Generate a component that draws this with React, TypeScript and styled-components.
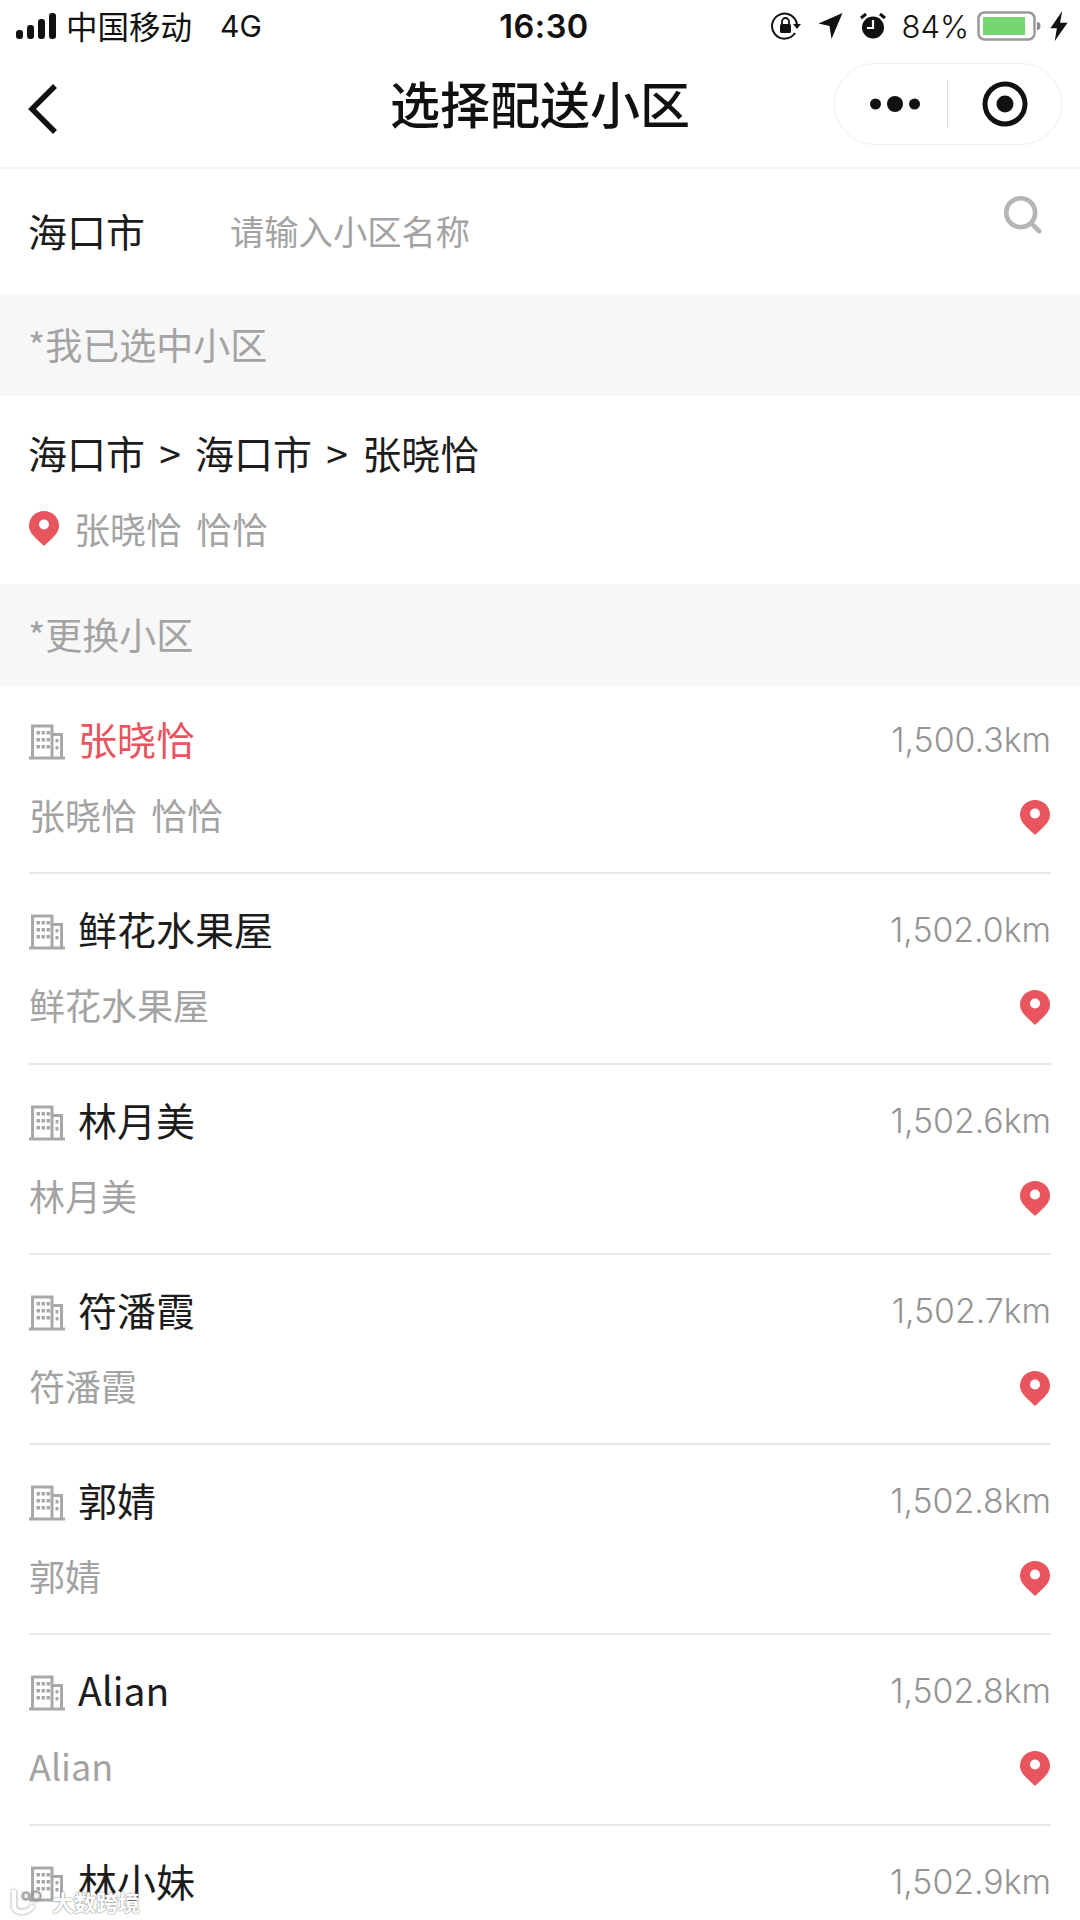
import * as React from "react";
import styled, { createGlobalStyle } from "styled-components";

const Colors = {
  text: "#1c1c1c",
  subtle: "#a3a3a3",
  red: "#e8555f",
  band: "#f7f7f7",
  line: "#e8e8e8"
};

const GlobalStyle = createGlobalStyle`
  html, body {
    margin: 0;
    padding: 0;
    background: #fff;
  }
  body {
    font-family: "Noto Sans CJK SC", "Noto Sans", sans-serif;
  }
`;

const Page = styled.div`
  position: relative;
  width: 1080px;
  height: 1920px;
  overflow: hidden;
  background: #fff;
`;

const StatusBar = styled.div`
  height: 52px;
  padding: 0 12px 0 16px;
  display: flex;
  align-items: center;
  justify-content: space-between;
  color: #111;
`;

const StatusSide = styled.div`
  flex: 1 1 0;
  display: flex;
  align-items: center;
  justify-content: ${p => (p.$right ? "flex-end" : "flex-start")};
`;

const Carrier = styled.span`
  margin-left: 10px;
  font-size: 31.500px;
  line-height: 1;
`;

const Network = styled.span`
  margin-left: 28px;
  font-family: "Inter", sans-serif;
  font-size: 30px;
  line-height: 1;
`;

const Clock = styled.span`
  margin-left: 4px;
  font-family: "Inter", sans-serif;
  font-size: 32.500px;
  font-weight: 600;
  letter-spacing: 0.5px;
`;

const Percent = styled.span`
  margin: 0 8px 0 16px;
  font-family: "Inter", sans-serif;
  font-size: 31px;
  font-weight: 300;
`;

const NavBar = styled.div`
  position: relative;
  height: 117px;
  box-sizing: border-box;
  padding: 11px 18px 0 28px;
  display: flex;
  align-items: flex-start;
  justify-content: space-between;
  border-bottom: 2px solid #f4f4f4;
`;

const BackIcon = styled.svg`
  width: 30px;
  height: 52px;
  margin-top: 20px;
`;

const Title = styled.div`
  position: absolute;
  left: 0;
  right: 0;
  top: 16px;
  text-align: center;
  font-size: 50px;
  line-height: 68px;
  font-weight: 500;
  color: #111;
`;

const Capsule = styled.div`
  width: 228px;
  height: 82px;
  box-sizing: border-box;
  border: 1px solid #eeeeee;
  border-radius: 41px;
  display: flex;
  align-items: center;
`;

const MenuSlot = styled.div`
  width: 112px;
  box-sizing: border-box;
  padding-left: 8px;
  display: flex;
  align-items: center;
  justify-content: center;
`;

const CloseSlot = styled.div`
  flex: 1;
  display: flex;
  align-items: center;
  justify-content: center;
`;

const CapsuleDivider = styled.div`
  width: 1px;
  height: 48px;
  background: #dddddd;
`;

const SearchRow = styled.div`
  height: 125px;
  box-sizing: border-box;
  padding: 0 28px 4px;
  display: flex;
  align-items: center;
`;

const City = styled.div`
  width: 202px;
  font-size: 39px;
  color: ${Colors.text};
`;

const Placeholder = styled.div`
  flex: 1;
  font-size: 34.300px;
  color: ${Colors.subtle};
`;

const SearchIcon = styled.svg`
  width: 41px;
  height: 41px;
  margin: 0 8px 29px 0;
`;

const Band = styled.div`
  height: 102px;
  box-sizing: border-box;
  padding: 0 28px 3px;
  display: flex;
  align-items: center;
  font-size: 37px;
  color: ${Colors.subtle};
  background: ${Colors.band};
`;

const Selected = styled.div`
  height: 188px;
  box-sizing: border-box;
  padding: 24px 28px 0;
`;

const Path = styled.div`
  font-size: 39px;
  line-height: 64px;
  word-spacing: 5.500px;
  color: ${Colors.text};
`;

const SelectedAddress = styled.div`
  margin-top: 14px;
  display: flex;
  align-items: center;
  gap: 14px;
  font-size: 36px;
  line-height: 60px;
  color: ${Colors.subtle};
`;

const Spot = styled.span`
  word-spacing: 6px;
`;

const List = styled.div`
  padding: 0 29px;
`;

const Row = styled.div`
  height: 190.3px;
  box-sizing: border-box;
  margin-top: ${p => (p.$first ? "-2px" : "0")};
  border-bottom: 2px solid ${Colors.line};
  display: flex;
  flex-direction: column;
`;

const RowTop = styled.div`
  margin-top: 23px;
  height: 62px;
  display: flex;
  align-items: center;
`;

const Name = styled.div`
  margin-left: 13px;
  flex: 1;
  font-size: 39px;
  color: ${p => (p.$active ? Colors.red : Colors.text)};
`;

const Distance = styled.div`
  margin-top: 3px;
  font-family: "Inter", sans-serif;
  font-size: 33.800px;
  font-weight: 300;
  color: #949494;
`;

const RowBottom = styled.div`
  margin-top: 14px;
  height: 62px;
  display: flex;
  align-items: center;
  justify-content: space-between;
  font-size: 36px;
  color: ${Colors.subtle};
`;

const PinBox = styled.svg`
  width: 32px;
  height: 36px;
  flex: none;
  margin-top: 6px;
`;

const SelectedPin = styled(PinBox)`
  margin: 0;
`;

const BuildingBox = styled.svg`
  width: 36px;
  height: 36px;
  flex: none;
  margin-top: 8px;
`;

const Watermark = styled.div`
  position: absolute;
  left: 10px;
  bottom: 4px;
  display: flex;
  align-items: center;
  gap: 8px;
  font-size: 22px;
  font-weight: 700;
  line-height: 30px;
  color: #fff;
  text-shadow: 0 0 2px #8a8a8a, 0 0 1px #8a8a8a;
`;

const WatermarkMark = styled.svg`
  width: 34px;
  height: 28px;
  filter: drop-shadow(0 0 1.5px #8a8a8a);
`;

const StatusGlyph = styled.svg`
  margin-left: ${p => p.$gap}px;
`;

const PinShape = () => (
  <>
    <path
      d="M16 1C7.7 1 1 7.5 1 15.6c0 5.2 2.600 8.400 6 11.800L16 36l9-8.600c3.400-3.400 6-6.600 6-11.800C31 7.500 24.300 1 16 1z"
      fill={Colors.red}
    />
    <circle cx="16" cy="14.500" r="5" fill="#fff" />
  </>
);

const Pin = () => (
  <PinBox viewBox="0 0 32 36">
    <PinShape />
  </PinBox>
);

const Building = () => (
  <BuildingBox viewBox="0 0 36 36" fill="none">
    <path
      d="M3.500 34V2h19.500V34M23 10.500h9.500V34M0 34h36"
      stroke="#a8a8a8"
      strokeWidth="3"
    />
    <path
      d="M7.500 7h3.500v3.500H7.500zM12.500 7h3.500v3.500H12.500zM17.500 7h3.500v3.500H17.500zM7.500 14h3.500v3.500H7.500zM12.500 14h3.500v3.500H12.500zM17.500 14h3.500v3.500H17.500zM7.500 21h3.500v3.500H7.500zM12.500 21h3.500v3.500H12.500zM17.500 21h3.500v3.500H17.500zM26.500 15h3v3.500h-3zM26.500 22h3v3.500h-3z"
      fill="#a8a8a8"
    />
  </BuildingBox>
);

const Signal = () => (
  <svg width="40" height="26" viewBox="0 0 40 26">
    <rect x="0" y="17" width="7" height="9" rx="3" fill="#111" />
    <rect x="11" y="12" width="7" height="14" rx="3" fill="#111" />
    <rect x="22" y="6" width="7" height="20" rx="3" fill="#111" />
    <rect x="33" y="0" width="7" height="26" rx="3" fill="#111" />
  </svg>
);

const RotationLock = () => (
  <svg width="30" height="30" viewBox="0 0 30 30" fill="none">
    <path d="M24 22a12.500 12.500 0 1 1 2-8" stroke="#111" strokeWidth="2" />
    <path d="M22 13h8l-4 5z" fill="#111" />
    <rect x="9" y="13" width="11" height="9" rx="1.500" fill="#111" />
    <path d="M11 13v-2.500a3.500 3.500 0 0 1 7 0V13" stroke="#111" strokeWidth="1.800" />
  </svg>
);

const Location = () => (
  <StatusGlyph $gap={17} width="25" height="26" viewBox="0 0 24 26">
    <path d="M24 0L13 26l-2-13L0 10.500z" fill="#111" />
  </StatusGlyph>
);

const Alarm = () => (
  <StatusGlyph $gap={17} width="26" height="28" viewBox="0 0 26 28">
    <circle cx="13" cy="15.500" r="11" fill="#111" />
    <path d="M13 8v8H7" stroke="#fff" strokeWidth="2.200" fill="none" />
    <path d="M1 6l5-4M25 6l-5-4" stroke="#111" strokeWidth="3" />
  </StatusGlyph>
);

const Battery = () => (
  <svg width="64" height="30" viewBox="0 0 64 30">
    <rect x="1.500" y="1.500" width="56" height="27" rx="6" fill="none" stroke="#9a9a9a" strokeWidth="2.500" />
    <rect x="6" y="6" width="42" height="18" fill="#76d672" />
    <path d="M60 11c2.500 0 3.500 2 3.500 4s-1 4-3.500 4z" fill="#8a8a8a" />
  </svg>
);

const Bolt = () => (
  <StatusGlyph $gap={9} width="18" height="30" viewBox="0 0 16 28">
    <path d="M11 0L0 16h6L4 28l12-17H9z" fill="#111" />
  </StatusGlyph>
);

const Place = ({
  name,
  distance,
  active,
  clipped
}: {
  name: string;
  distance: string;
  active?: boolean;
  clipped?: boolean;
}) => (
  <Row $first={active}>
    <RowTop>
      <Building />
      <Name $active={active}>{name}</Name>
      <Distance>{distance}</Distance>
    </RowTop>
    {clipped ? null : (
      <RowBottom>
        <Spot>{active ? "张晓恰 恰恰" : name}</Spot>
        <Pin />
      </RowBottom>
    )}
  </Row>
);

const places = [
  { name: "张晓恰", distance: "1,500.3km", active: true },
  { name: "鲜花水果屋", distance: "1,502.0km" },
  { name: "林月美", distance: "1,502.6km" },
  { name: "符潘霞", distance: "1,502.7km" },
  { name: "郭婧", distance: "1,502.8km" },
  { name: "Alian", distance: "1,502.8km" },
  { name: "林小妹", distance: "1,502.9km", clipped: true }
];

const App = () => (
  <Page>
    <GlobalStyle />
    <StatusBar>
      <StatusSide>
        <Signal />
        <Carrier>中国移动</Carrier>
        <Network>4G</Network>
      </StatusSide>
      <Clock>16:30</Clock>
      <StatusSide $right>
        <RotationLock />
        <Location />
        <Alarm />
        <Percent>84%</Percent>
        <Battery />
        <Bolt />
      </StatusSide>
    </StatusBar>
    <NavBar>
      <BackIcon viewBox="0 0 30 52" fill="none">
        <path d="M27 3L4 26l23 23" stroke="#111" strokeWidth="5.500" />
      </BackIcon>
      <Title>选择配送小区</Title>
      <Capsule>
        <MenuSlot>
          <svg width="50" height="20" viewBox="0 0 50 20">
            <circle cx="5.500" cy="10" r="5.500" fill="#111" />
            <circle cx="25" cy="10" r="8" fill="#111" />
            <circle cx="44.500" cy="10" r="5.500" fill="#111" />
          </svg>
        </MenuSlot>
        <CapsuleDivider />
        <CloseSlot>
          <svg width="46" height="46" viewBox="0 0 46 46">
            <circle cx="23" cy="23" r="20" fill="none" stroke="#111" strokeWidth="5" />
            <circle cx="23" cy="23" r="8.500" fill="#111" />
          </svg>
        </CloseSlot>
      </Capsule>
    </NavBar>
    <SearchRow>
      <City>海口市</City>
      <Placeholder>请输入小区名称</Placeholder>
      <SearchIcon viewBox="0 0 44 44" fill="none">
        <circle cx="19" cy="19" r="15.500" stroke="#b5b5b5" strokeWidth="5" />
        <path d="M31 31l8 8" stroke="#b5b5b5" strokeWidth="5" strokeLinecap="round" />
      </SearchIcon>
    </SearchRow>
    <Band>*我已选中小区</Band>
    <Selected>
      <Path>海口市 &gt; 海口市 &gt; 张晓恰</Path>
      <SelectedAddress>
        <SelectedPin viewBox="0 0 32 36">
          <PinShape />
        </SelectedPin>
        <Spot>张晓恰 恰恰</Spot>
      </SelectedAddress>
    </Selected>
    <Band>*更换小区</Band>
    <List>
      {places.map(place => (
        <Place key={place.distance + place.name} {...place} />
      ))}
    </List>
    <Watermark>
      <WatermarkMark viewBox="0 0 34 28" fill="none">
        <path d="M4 3v16c0 4 4 6 8 6s9-2 11-7" stroke="#fff" strokeWidth="4.500" />
        <circle cx="16" cy="9" r="3.500" stroke="#999" strokeWidth="1.500" />
        <circle cx="26" cy="9" r="4.500" stroke="#999" strokeWidth="1.500" />
      </WatermarkMark>
      <span>大数跨境</span>
    </Watermark>
  </Page>
);

export default App;
